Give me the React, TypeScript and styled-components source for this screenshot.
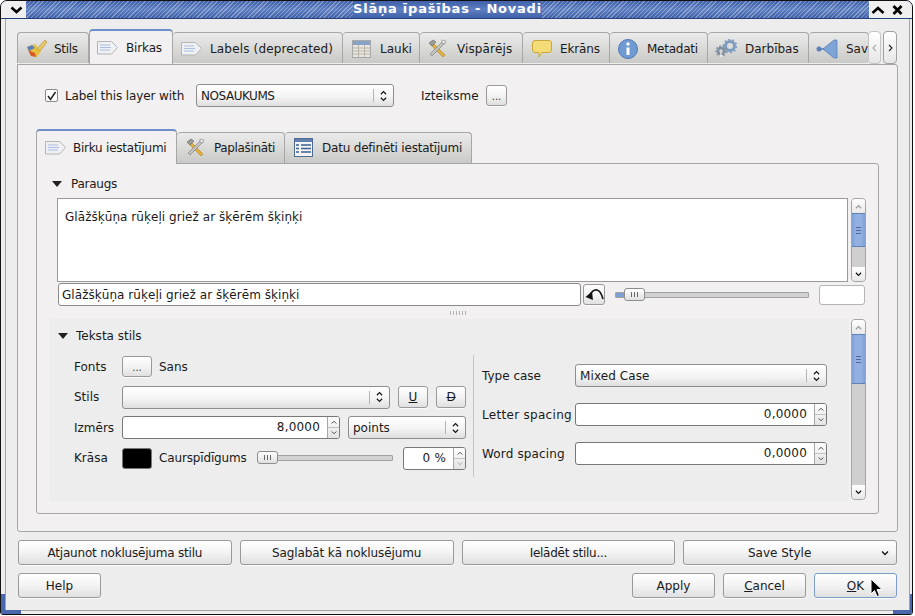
import React from 'react';
import styled, { createGlobalStyle } from 'styled-components';

const GlobalStyle = createGlobalStyle`
  html, body {
    margin: 0;
    padding: 0;
    width: 915px;
    height: 616px;
    overflow: hidden;
    background: #fff;
    font-family: 'DejaVu Sans', sans-serif;
    font-size: 12px;
    color: #1a1a1a;
  }
  * {
    box-sizing: border-box;
  }
`;

// Icons
const BrushIcon = () => (
  <svg width="22" height="20" viewBox="0 0 22 20">
    <path d="M1 8l8-3 6 7-4 6-6-1z" fill="#e4c23e" />
    <path d="M2 11l7 3 1 4-5-1z" fill="#d8592c" />
    <path d="M1 8l5-2 3 3-6 3z" fill="#5d80b8" />
    <path d="M11 10l8-9 2 2-7 9z" fill="#e8c860" stroke="#b08a30" strokeWidth="0.6" />
  </svg>
);

const TagIcon = () => (
  <svg width="21" height="14" viewBox="0 0 21 14">
    <path d="M.5.5h14l6 6-6 6.500H.5z" fill="#eef0f4" stroke="#b4b4b4" />
    <path d="M3 4h10M3 6.500h11M3 9h10" stroke="#a9bfe0" />
  </svg>
);

const TableIcon = () => (
  <svg width="19" height="18" viewBox="0 0 19 18">
    <rect x=".5" y=".5" width="18" height="17" fill="#e9e6df" stroke="#a8a8a8" />
    <rect x="1" y="1" width="17" height="4" fill="#87a3c8" />
    <path d="M1 8h17M1 11h17M1 14h17M6.500 5v12M12.500 5v12" stroke="#b8b4aa" />
  </svg>
);

const ToolsIcon = () => (
  <svg width="19" height="19" viewBox="0 0 19 19">
    <path d="M4 3l13 13-2 2L2 5z" fill="#e2b23c" stroke="#a87f20" strokeWidth="0.6" />
    <path d="M15 2L2 15l2 2L17 4z" fill="#c2c2c0" stroke="#777" strokeWidth="0.6" />
    <path d="M1 4l4-3 3 2-4 4z" fill="#9a9a98" stroke="#666" strokeWidth="0.6" />
    <path d="M14 1l4 1-1 3-3-1z" fill="#e8e8e6" stroke="#888" strokeWidth="0.6" />
  </svg>
);

const BubbleIcon = () => (
  <svg width="20" height="18" viewBox="0 0 20 18">
    <path d="M3 .5h14a2.500 2.500 0 012.500 2.500v7a2.500 2.500 0 01-2.500 2.500h-7l-3 4.500v-4.500H3A2.500 2.500 0 01.5 10V3A2.500 2.500 0 013 .5z" fill="#f3dc76" stroke="#c8a83c" />
  </svg>
);

const InfoIcon = () => (
  <svg width="20" height="20" viewBox="0 0 20 20">
    <circle cx="10" cy="10" r="9.500" fill="#6f9ad2" stroke="#4f78b0" />
    <circle cx="10" cy="5" r="1.700" fill="#fff" />
    <path d="M8.500 8.500h3V16h-3z" fill="#fff" />
  </svg>
);

const GearsIcon = () => (
  <svg width="22" height="20" viewBox="0 0 22 20">
    <circle cx="15" cy="7" r="4.500" fill="none" stroke="#7f9cc0" strokeWidth="3" />
    <circle cx="15" cy="7" r="6.500" fill="none" stroke="#7f9cc0" strokeWidth="1.500" strokeDasharray="2 2" />
    <circle cx="6" cy="12" r="3" fill="none" stroke="#8090a0" strokeWidth="2.500" />
    <circle cx="6" cy="12" r="5" fill="none" stroke="#8090a0" strokeWidth="1.500" strokeDasharray="2 1.500" />
    <path d="M6 13v5M5 17h2" stroke="#fff" strokeWidth="1" />
  </svg>
);

const ActionIcon = () => (
  <svg width="22" height="20" viewBox="0 0 22 20">
    <circle cx="3" cy="10" r="2.500" fill="#5d80b8" />
    <path d="M5 10h4" stroke="#5d80b8" strokeWidth="1.500" />
    <path d="M7 10l11-9h3v18h-3z" fill="#7ea3d6" stroke="#4f78b0" strokeWidth="0.7" />
  </svg>
);

const DataIcon = () => (
  <svg width="19" height="19" viewBox="0 0 19 19">
    <rect x=".5" y=".5" width="18" height="18" fill="#f2f4f8" stroke="#4f6a90" />
    <rect x="1" y="1" width="17" height="3" fill="#5f82b0" />
    <path d="M2 7h3M7 7h10M2 10.500h3M7 10.500h10M2 14h3M7 14h10" stroke="#3f5f8c" strokeWidth="1.500" />
  </svg>
);

const UndoIcon = () => (
  <svg width="19" height="13" viewBox="0 0 19 13">
    <path d="M4.500 7.500C7 3 9.500 1.500 12 2c2.500.5 4.500 3.500 6 9" fill="none" stroke="#111" strokeWidth="1.600" />
    <path d="M.5 9L7 3.500 8 12z" fill="#111" />
  </svg>
);

const Chevron = ({ dir, color = '#111', size = 7 }: { dir: 'up' | 'down'; color?: string; size?: number }) => (
  <svg width={size} height={Math.round(size * 0.65)} viewBox="0 0 8 5">
    <path d={dir === 'up' ? 'M1 4.500L4 1.500l3 3' : 'M1 .5l3 3 3-3'} fill="none" stroke={color} strokeWidth="1.300" />
  </svg>
);

const SideChevron = ({ dir, color }: { dir: 'left' | 'right'; color: string }) => (
  <svg width="5" height="8" viewBox="0 0 5 8">
    <path d={dir === 'left' ? 'M4 1L1 4l3 3' : 'M1 1l3 3-3 3'} fill="none" stroke={color} strokeWidth="1.100" />
  </svg>
);

// Window frame
const Frame = styled.div`
  position: relative;
  width: 913px;
  height: 615px;
  border: 1px solid #111;
  border-radius: 7px 7px 3px 3px;
  background: #ededed;
  display: flex;
  flex-direction: column;
  overflow: hidden;
`;

const TitleBar = styled.div`
  flex: 0 0 18px;
  display: flex;
  align-items: stretch;
  background: linear-gradient(#3f60a8, #5d7fc2 50%, #3f60a8);
  border-bottom: 1px solid #26407a;
`;

const TitleButton = styled.div<{ $w: number }>`
  flex: 0 0 ${p => p.$w}px;
  background: #efefef;
  display: flex;
  align-items: center;
  justify-content: center;
`;

const MenuButton = styled(TitleButton)`
  padding-left: 5px;
`;

const TitleHatch = styled.div`
  flex: 1;
  background: repeating-linear-gradient(
    135deg,
    rgba(255, 255, 255, 0.32) 0 1px,
    transparent 1px 3px
  );
`;

const TitleText = styled.div`
  font-weight: bold;
  font-size: 13px;
  letter-spacing: 0.78px;
  line-height: 16px;
  color: #fff;
  white-space: nowrap;
`;

const Body = styled.div`
  flex: 1;
  margin: 0 2px 3px 4px;
  border: 1px solid #a2a2a2;
  border-top: 0;
  padding: 11px 11px 0 11px;
  display: flex;
  flex-direction: column;
`;

const Grip = styled.div<{ $right?: boolean }>`
  position: absolute;
  bottom: 0;
  ${p => (p.$right ? 'right: 0;' : 'left: 0;')}
  width: ${p => (p.$right ? 19 : 20)}px;
  height: 20px;
  pointer-events: none;
  border-bottom: 4px solid #4a67ad;
  ${p => (p.$right ? 'border-right: 2px solid #4a67ad;' : 'border-left: 4px solid #4a67ad;')}
`;

// Tabs
const TabStrip = styled.div<{ $h: number }>`
  height: ${p => p.$h}px;
  display: flex;
  align-items: flex-end;
`;

const TabClip = styled.div`
  flex: 0 0 851px;
  height: 36px;
  margin-bottom: -1px;
  display: flex;
  align-items: flex-start;
  overflow: hidden;
`;

const Tab = styled.div<{ $w: number; $active?: boolean; $gap?: number; $pad?: number; $h: number }>`
  position: relative;
  z-index: ${p => (p.$active ? 2 : 1)};
  flex: 0 0 ${p => p.$w}px;
  height: ${p => (p.$active ? p.$h + 4 : p.$h)}px;
  display: flex;
  align-items: center;
  gap: ${p => p.$gap ?? 8}px;
  padding-left: ${p => p.$pad ?? 9}px;
  padding-bottom: ${p => (p.$active ? 0 : 1)}px;
  white-space: nowrap;
  border: 1px solid #a6a6a6;
  border-bottom: 0;
  border-left-width: ${p => (p.$active ? 1 : 0)}px;
  border-radius: 4px 4px 0 0;
  color: #1a1a1a;
  background: ${p =>
    p.$active ? '#f2f0f0' : 'linear-gradient(#ebebeb, #c9c9c7)'};
  ${p => p.$active && 'border-top: 2px solid #6e8fc9;'}
  margin-bottom: ${p => (p.$active ? -1 : 0)}px;
`;

const OuterTab = styled(Tab)`
  margin-top: ${p => (p.$active ? 0 : 3)}px;
  margin-bottom: 0;
  padding-bottom: 0;
  padding-top: ${p => (p.$active ? 0 : 1)}px;
`;

const FirstTab = styled(OuterTab)`
  border-left-width: 1px;
`;

const ScrollTabs = styled.div`
  display: flex;
  gap: 2px;
  align-self: flex-start;
  margin-top: 1px;
`;

const TabArrow = styled.div<{ $off?: boolean; $w: number }>`
  flex: 0 0 ${p => p.$w}px;
  height: 33px;
  display: flex;
  align-items: center;
  justify-content: center;
  border: 1px solid ${p => (p.$off ? '#c4c4c4' : '#a0a0a0')};
  border-radius: 4px;
  background: linear-gradient(#fff, #e6e6e6);
`;

const Pane = styled.div<{ $h: number }>`
  height: ${p => p.$h}px;
  background: #f2f0f0;
  border: 1px solid #a6a6a6;
  border-radius: 0 3px 3px 3px;
  display: flex;
  flex-direction: column;
`;

const OuterPane = styled(Pane)`
  padding: 0 18px 0 18px;
`;

const TopRow = styled.div`
  display: flex;
  align-items: center;
  height: 23px;
  margin: 19px 0 24px 9px;
`;

const Check = styled.div`
  flex: 0 0 13px;
  height: 13px;
  border: 1px solid #8a8a8a;
  border-radius: 2px;
  background: #fff;
  display: flex;
  align-items: center;
  justify-content: center;
  margin-right: 7px;
`;

const Text = styled.span<{ $w?: number; $ml?: number; $ls?: number }>`
  ${p => p.$w && `flex: 0 0 ${p.$w}px;`}
  margin-left: ${p => p.$ml ?? 0}px;
  letter-spacing: ${p => p.$ls ?? 0}px;
  white-space: nowrap;
`;

// Controls
const Btn = styled.div<{ $w?: number; $h?: number; $ml?: number; $default?: boolean }>`
  ${p => p.$w && `flex: 0 0 ${p.$w}px; width: ${p.$w}px;`}
  height: ${p => p.$h ?? 25}px;
  margin-left: ${p => p.$ml ?? 0}px;
  display: flex;
  align-items: center;
  justify-content: center;
  border: 1px solid ${p => (p.$default ? '#7d9ccb' : '#9a9a9a')};
  border-radius: 3px;
  background: linear-gradient(#fff, #f3f3f3 50%, #e0e0e0);
  white-space: nowrap;
  box-shadow: 0 1px 0 rgba(255, 255, 255, 0.7);
`;

const BrowseDots = styled.span`
  font-size: 10px;
  color: #333;
  padding-top: 2px;
`;

const ComboBox = styled.div<{ $w: number; $h?: number; $ml?: number }>`
  flex: 0 0 ${p => p.$w}px;
  width: ${p => p.$w}px;
  height: ${p => p.$h ?? 23}px;
  margin-left: ${p => p.$ml ?? 0}px;
  display: flex;
  align-items: center;
  padding-left: 4px;
  border: 1px solid #8e8e8e;
  border-radius: 3px;
  background: linear-gradient(#fff, #f4f4f4 55%, #dfdfdf);
`;

const ComboText = styled.span<{ $ls?: number }>`
  flex: 1;
  letter-spacing: ${p => p.$ls ?? 0}px;
  white-space: nowrap;
`;

const ComboArrows = styled.div`
  flex: 0 0 20px;
  height: 13px;
  border-left: 1px solid #b4b4b4;
  display: flex;
  flex-direction: column;
  align-items: center;
  justify-content: center;
  gap: 2px;
`;

const Combo = ({ w, text, h, ml, ls }: { w: number; text?: string; h?: number; ml?: number; ls?: number }) => (
  <ComboBox $w={w} $h={h} $ml={ml}>
    <ComboText $ls={ls}>{text}</ComboText>
    <ComboArrows>
      <Chevron dir="up" />
      <Chevron dir="down" />
    </ComboArrows>
  </ComboBox>
);

const SpinBox = styled.div<{ $w: number; $ml?: number }>`
  flex: 0 0 ${p => p.$w}px;
  width: ${p => p.$w}px;
  height: 23px;
  margin-left: ${p => p.$ml ?? 0}px;
  display: flex;
  border: 1px solid #777;
  border-radius: 3px;
  background: #fff;
  overflow: hidden;
`;

const SpinValue = styled.span`
  flex: 1;
  text-align: right;
  line-height: 21px;
  padding-right: 7px;
  letter-spacing: 0.2px;
`;

const SpinArrows = styled.div`
  flex: 0 0 12px;
  display: flex;
  flex-direction: column;
  border-left: 1px solid #a6a6a6;
  background: linear-gradient(#fdfdfd, #e3e3e3);
`;

const SpinPart = styled.div`
  flex: 1;
  display: flex;
  align-items: center;
  justify-content: center;
  & + & {
    border-top: 1px solid #c2c2c2;
  }
`;

const Spin = ({ w, value, ml, off }: { w: number; value: string; ml?: number; off?: boolean }) => (
  <SpinBox $w={w} $ml={ml}>
    <SpinValue>{value}</SpinValue>
    <SpinArrows>
      <SpinPart>
        <Chevron dir="up" size={6} color="#444" />
      </SpinPart>
      <SpinPart>
        <Chevron dir="down" size={6} color={off ? '#aaa' : '#444'} />
      </SpinPart>
    </SpinArrows>
  </SpinBox>
);

const SliderTrack = styled.div<{ $w: number; $ml?: number }>`
  position: relative;
  flex: 0 0 ${p => p.$w}px;
  height: 6px;
  margin-left: ${p => p.$ml ?? 0}px;
  background: #d2d2d2;
  border: 1px solid #a2a2a2;
  border-radius: 1px;
`;

const SliderFill = styled.div<{ $w: number }>`
  width: ${p => p.$w}px;
  height: 100%;
  background: #7e9fd4;
`;

const SliderThumb = styled.div<{ $left: number }>`
  position: absolute;
  top: -5px;
  left: ${p => p.$left}px;
  width: 21px;
  height: 13px;
  border: 1px solid #8e8e8e;
  border-radius: 3px;
  background: linear-gradient(#fff, #e0e0e0);
  display: flex;
  align-items: center;
  justify-content: center;
  gap: 2px;
`;

const Notch = styled.i`
  width: 1px;
  height: 5px;
  background: #666;
`;

const Thumb = ({ left }: { left: number }) => (
  <SliderThumb $left={left}>
    <Notch />
    <Notch />
    <Notch />
  </SliderThumb>
);

// Scrollbar
const ScrollTrack = styled.div<{ $h: number }>`
  flex: 0 0 15px;
  width: 15px;
  height: ${p => p.$h}px;
  display: flex;
  flex-direction: column;
  border-radius: 4px;
  overflow: hidden;
  border: 1px solid #a4a4a4;
  background: #cfcfcf;
`;

const ScrollEnd = styled.div`
  flex: 0 0 14px;
  background: linear-gradient(#fff, #e8e8e8);
  display: flex;
  align-items: center;
  justify-content: center;
`;

const ScrollThumb = styled.div<{ $h: number }>`
  flex: 0 0 ${p => p.$h}px;
  background: linear-gradient(90deg, #7e9fd4, #92b1e0 30%, #92b1e0 70%, #7e9fd4);
  border-top: 1px solid #5f82b8;
  border-bottom: 1px solid #5f82b8;
  display: flex;
  flex-direction: column;
  align-items: center;
  justify-content: center;
  gap: 2px;
`;

const ThumbLine = styled.i`
  width: 5px;
  height: 1px;
  background: #4f6a98;
`;

const ScrollSpacer = styled.div`
  flex: 1;
`;

const ScrollBar = ({ h, thumb }: { h: number; thumb: number }) => (
  <ScrollTrack $h={h}>
    <ScrollEnd>
      <Chevron dir="up" color="#999" />
    </ScrollEnd>
    <ScrollThumb $h={thumb}>
      <ThumbLine />
      <ThumbLine />
      <ThumbLine />
    </ScrollThumb>
    <ScrollSpacer />
    <ScrollEnd>
      <Chevron dir="down" />
    </ScrollEnd>
  </ScrollTrack>
);

// Inner page
const InnerPane = styled(Pane)`
  padding-top: 13px;
`;

const GroupHead = styled.div<{ $ml: number }>`
  display: flex;
  align-items: center;
  gap: 8px;
  height: 14px;
  margin-left: ${p => p.$ml}px;
`;

const Triangle = styled.i`
  width: 0;
  height: 0;
  border-left: 5.5px solid transparent;
  border-right: 5.5px solid transparent;
  border-top: 6px solid #222;
`;

const PreviewRow = styled.div`
  display: flex;
  gap: 3px;
  margin: 7px 0 1px 20px;
`;

const PreviewBox = styled.div`
  flex: 0 0 791px;
  height: 84px;
  padding: 11px 7px;
  background: #fff;
  border: 1px solid #9a9a9a;
  white-space: nowrap;
`;

const SampleRow = styled.div`
  display: flex;
  align-items: center;
  height: 23px;
  margin-left: 21px;
`;

const LineEdit = styled.div<{ $w: number; $ml?: number; $h?: number; $plain?: boolean }>`
  flex: 0 0 ${p => p.$w}px;
  height: ${p => p.$h ?? 23}px;
  margin-left: ${p => p.$ml ?? 0}px;
  padding-left: 3px;
  line-height: 22px;
  letter-spacing: 0.05px;
  background: #fff;
  border: 1px solid ${p => (p.$plain ? '#b4b4b4' : '#8a8a8a')};
  border-radius: 3px;
  white-space: nowrap;
`;

const SplitHandle = styled.div`
  height: 13px;
  display: flex;
  align-items: center;
  justify-content: center;
`;

const Dots = styled.i`
  width: 17px;
  height: 4px;
  background: radial-gradient(circle, #b4b4b4 0.6px, transparent 0.8px) 0 0 / 3px 2px;
`;

const StyleRow = styled.div`
  display: flex;
  gap: 2px;
  margin-left: 12px;
`;

const StylePanel = styled.div`
  flex: 0 0 800px;
  height: 182px;
  padding-top: 10px;
  background: #ededed;
  display: flex;
  flex-direction: column;
`;

const PanelColumns = styled.div`
  display: flex;
  margin-top: 12px;
  padding-left: 25px;
`;

const LeftFields = styled.div`
  flex: 0 0 399px;
  height: 122px;
  display: flex;
  flex-direction: column;
  gap: 7.5px;
`;

const FieldRow = styled.div`
  display: flex;
  align-items: center;
  height: 23px;
`;

const Divider = styled.div`
  flex: 0 0 1px;
  height: 122px;
  background: #c6c6c6;
`;

const RightFields = styled.div`
  padding: 9px 0 0 8px;
  display: flex;
  flex-direction: column;
  gap: 16px;
`;

const Swatch = styled.div`
  flex: 0 0 30px;
  height: 21px;
  background: #000;
  border: 1px solid #777;
  border-radius: 3px;
`;

const ButtonRow = styled.div`
  display: grid;
  grid-template-columns: repeat(4, 1fr);
  gap: 8px;
  width: 879px;
  margin: 8px 0 0 1px;
`;

const ActionRow = styled.div`
  display: flex;
  width: 879px;
  gap: 8px;
  margin: 8px 0 0 1px;
`;

const Spacer = styled.div`
  flex: 1;
`;

const SaveBtn = styled(Btn)`
  position: relative;
  padding-right: 21px;
`;

const SaveArrow = styled.span`
  position: absolute;
  right: 7px;
  top: 10px;
  line-height: 0;
`;

const Underlined = styled.span`
  text-decoration: underline;
`;

const Struck = styled.span`
  text-decoration: line-through;
`;

const Pointer = styled.svg`
  position: absolute;
  left: 869px;
  top: 578px;
`;

const App: React.FC = () => (
  <>
    <GlobalStyle />
    <Frame>
      <TitleBar>
        <MenuButton $w={25}>
          <svg width="13" height="8" viewBox="0 0 13 8">
            <path d="M1.500 1.500L6.500 6l5-4.500" fill="none" stroke="#000" strokeWidth="2.600" />
          </svg>
        </MenuButton>
        <TitleHatch />
        <TitleText>Slāņa īpašības - Novadi</TitleText>
        <TitleHatch />
        <TitleButton $w={43}>
          <svg width="43" height="12" viewBox="0 0 43 12">
            <path d="M3.500 9l5.500-5 5.500 5" fill="none" stroke="#000" strokeWidth="2.600" />
            <path d="M24.500 2l8 8M32.500 2l-8 8" fill="none" stroke="#000" strokeWidth="2.800" />
          </svg>
        </TitleButton>
      </TitleBar>
      <Body>
        <TabStrip $h={34}>
          <TabClip>
            <FirstTab $h={31} $w={72} $pad={8} $gap={6}><BrushIcon /><Text $ls={-0.3}>Stils</Text></FirstTab>
            <OuterTab $h={31} $w={84} $active $pad={7}><TagIcon /><Text $ls={-0.15}>Birkas</Text></OuterTab>
            <OuterTab $h={31} $w={170} $pad={8}><TagIcon /><Text $ls={0.16}>Labels (deprecated)</Text></OuterTab>
            <OuterTab $h={31} $w={77} $gap={9}><TableIcon />Lauki</OuterTab>
            <OuterTab $h={31} $w={103} $pad={8} $gap={10}><ToolsIcon /><Text $ls={0.1}>Vispārējs</Text></OuterTab>
            <OuterTab $h={31} $w={87}><BubbleIcon /><Text $ls={-0.15}>Ekrāns</Text></OuterTab>
            <OuterTab $h={31} $w={98} $pad={8} $gap={9}><InfoIcon /><Text $ls={-0.25}>Metadati</Text></OuterTab>
            <OuterTab $h={31} $w={101} $pad={7}><GearsIcon />Darbības</OuterTab>
            <OuterTab $h={31} $w={60} $pad={7}><ActionIcon />Sav</OuterTab>
          </TabClip>
          <ScrollTabs>
            <TabArrow $off $w={13}><SideChevron dir="left" color="#aaa" /></TabArrow>
            <TabArrow $w={14}><SideChevron dir="right" color="#222" /></TabArrow>
          </ScrollTabs>
        </TabStrip>
        <OuterPane $h={468}>
          <TopRow>
            <Check>
              <svg width="11" height="10" viewBox="0 0 11 10">
                <path d="M2 5l2.500 3.500L9.500 1" fill="none" stroke="#222" strokeWidth="1.500" />
              </svg>
            </Check>
            <Text $w={131} $ls={-0.1}>Label this layer with</Text>
            <Combo w={198} text="NOSAUKUMS" ls={-0.45} />
            <Text $ml={27} $w={65}>Izteiksme</Text>
            <Btn $w={21} $h={21}><BrowseDots>...</BrowseDots></Btn>
          </TopRow>
          <TabStrip $h={32}>
            <Tab $h={31} $w={141} $active $gap={7} $pad={8}><TagIcon /><Text $ls={-0.24}>Birku iestatījumi</Text></Tab>
            <Tab $h={31} $w={108} $gap={9}><ToolsIcon /><Text $ls={-0.36}>Paplašināti</Text></Tab>
            <Tab $h={31} $w={187} $gap={9}><DataIcon /><Text $ls={-0.2}>Datu definēti iestatījumi</Text></Tab>
          </TabStrip>
          <InnerPane $h={351}>
            <GroupHead $ml={15}>
              <Triangle />
              <Text $ml={1} $ls={-0.25}>Paraugs</Text>
            </GroupHead>
            <PreviewRow>
              <PreviewBox><Text $ls={0.05}>Glāžšķūņa rūķeļi griež ar šķērēm šķiņķi</Text></PreviewBox>
              <ScrollBar h={84} thumb={34} />
            </PreviewRow>
            <SampleRow>
              <LineEdit $w={523}>Glāžšķūņa rūķeļi griež ar šķērēm šķiņķi</LineEdit>
              <Btn $w={22} $h={21} $ml={2}><UndoIcon /></Btn>
              <SliderTrack $w={194} $ml={10}>
                <SliderFill $w={9} />
                <Thumb left={8} />
              </SliderTrack>
              <LineEdit $w={46} $h={20} $ml={10} $plain />
            </SampleRow>
            <SplitHandle><Dots /></SplitHandle>
            <StyleRow>
              <StylePanel>
                <GroupHead $ml={9}>
                  <Triangle />
                  <Text $ml={0}>Teksta stils</Text>
                </GroupHead>
                <PanelColumns>
                  <LeftFields>
                    <FieldRow>
                      <Text $w={48}>Fonts</Text>
                      <Btn $w={30} $h={21}><BrowseDots>...</BrowseDots></Btn>
                      <Text $ml={7}>Sans</Text>
                    </FieldRow>
                    <FieldRow>
                      <Text $w={48}>Stils</Text>
                      <Combo w={268} />
                      <Btn $w={30} $h={22} $ml={8}><Underlined>U</Underlined></Btn>
                      <Btn $w={30} $h={22} $ml={8}><Struck>D</Struck></Btn>
                    </FieldRow>
                    <FieldRow>
                      <Text $w={48}>Izmērs</Text>
                      <Spin w={218} value="8,0000" />
                      <Combo w={118} ml={8} text="points" />
                    </FieldRow>
                    <FieldRow>
                      <Text $w={48}>Krāsa</Text>
                      <Swatch />
                      <Text $ml={7} $w={98} $ls={-0.15}>Caurspīdīgums</Text>
                      <SliderTrack $w={136}>
                        <Thumb left={-1} />
                      </SliderTrack>
                      <Spin w={63} ml={10} value="0 %" off />
                    </FieldRow>
                  </LeftFields>
                  <Divider />
                  <RightFields>
                    <FieldRow>
                      <Text $w={93}>Type case</Text>
                      <Combo w={252} text="Mixed Case" ls={0.1} />
                    </FieldRow>
                    <FieldRow>
                      <Text $w={93} $ls={0.3}>Letter spacing</Text>
                      <Spin w={252} value="0,0000" />
                    </FieldRow>
                    <FieldRow>
                      <Text $w={93} $ls={0.15}>Word spacing</Text>
                      <Spin w={252} value="0,0000" />
                    </FieldRow>
                  </RightFields>
                </PanelColumns>
              </StylePanel>
              <ScrollBar h={181} thumb={50} />
            </StyleRow>
          </InnerPane>
        </OuterPane>
        <ButtonRow>
          <Btn><Text $ls={-0.2}>Atjaunot noklusējuma stilu</Text></Btn>
          <Btn><Text $ls={-0.1}>Saglabāt kā noklusējumu</Text></Btn>
          <Btn><Text $ls={-0.28}>Ielādēt stilu...</Text></Btn>
          <SaveBtn>
            Save Style
            <SaveArrow><Chevron dir="down" size={8} /></SaveArrow>
          </SaveBtn>
        </ButtonRow>
        <ActionRow>
          <Btn $w={83}>Help</Btn>
          <Spacer />
          <Btn $w={83}>Apply</Btn>
          <Btn $w={83}><span><Underlined>C</Underlined>ancel</span></Btn>
          <Btn $w={83} $default><span><Underlined>O</Underlined>K</span></Btn>
        </ActionRow>
      </Body>
      <Grip />
      <Grip $right />
    </Frame>
    <Pointer width="13" height="20" viewBox="0 0 13 20">
      <path d="M2 1v15l3.500-3.500 2.500 6 2.500-1-2.500-6h5z" fill="#000" stroke="#fff" strokeWidth="1" />
    </Pointer>
  </>
);

export default App;
